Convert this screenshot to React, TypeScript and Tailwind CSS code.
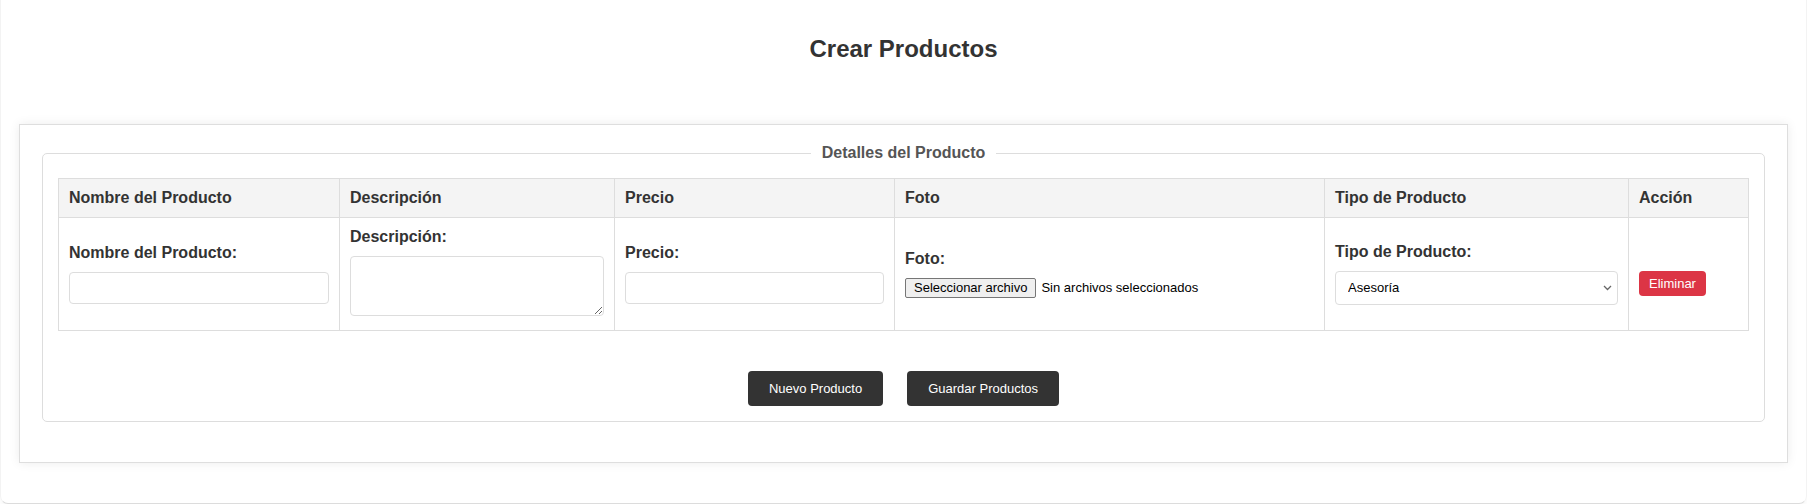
export default function App() {
  const cols = [281, 275, 280, 430, 304, 120];
  const heads = ["Nombre del Producto", "Descripción", "Precio", "Foto", "Tipo de Producto", "Acción"];

  return (
    <div className="min-h-screen bg-white" style={{ fontFamily: '"Liberation Sans", Arial, sans-serif' }}>
      <div className="border-x border-b border-x-[#f3f3f3] border-b-[#dcdcdc] rounded-b-lg pb-[40px] shadow-[0_2px_6px_rgba(0,0,0,0.04)]">
        <h1 className="pt-[35px] mb-[61px] text-center text-[24px] leading-[28px] font-bold text-[#333]">
          Crear Productos
        </h1>

        <div className="mx-[18px] border border-[#dedede] bg-white pt-[19px] pb-[40px] px-[22px] shadow-[0_0_10px_rgba(0,0,0,0.08)]">
          <fieldset className="border border-[#ddd] rounded-[5px] px-[15px] pt-[16px] pb-[15px]">
            <legend className="mx-auto px-[11px] text-[16px] leading-[18px] font-bold text-[#555]">
              Detalles del Producto
            </legend>

            <table className="w-full table-fixed border-collapse text-[#333]">
              <colgroup>
                {cols.map((w, i) => (
                  <col key={i} style={{ width: w }} />
                ))}
              </colgroup>
              <thead>
                <tr className="bg-[#f4f4f4]">
                  {heads.map((h) => (
                    <th
                      key={h}
                      className="border border-[#ddd] px-[10px] py-[10px] text-left text-[16px] leading-[18px] font-bold"
                    >
                      {h}
                    </th>
                  ))}
                </tr>
              </thead>
              <tbody>
                <tr>
                  <td className="border border-[#ddd] px-[10px] align-middle">
                    <label className="block mb-[10px] text-[16px] leading-[18px] font-bold">Nombre del Producto:</label>
                    <input type="text" className="block w-full h-[32px] border border-[#ddd] rounded-[4px] px-[8px] text-[13px]" />
                  </td>
                  <td className="border border-[#ddd] px-[10px] pt-[10px] pb-[14px] align-top">
                    <label className="block mb-[10px] text-[16px] leading-[18px] font-bold">Descripción:</label>
                    <textarea className="block w-full h-[60px] border border-[#ddd] rounded-[4px] px-[8px] text-[13px]" />
                  </td>
                  <td className="border border-[#ddd] px-[10px] align-middle">
                    <label className="block mb-[10px] text-[16px] leading-[18px] font-bold">Precio:</label>
                    <input type="text" className="block w-full h-[32px] border border-[#ddd] rounded-[4px] px-[8px] text-[13px]" />
                  </td>
                  <td className="border border-[#ddd] px-[10px] align-middle">
                    <label className="block mb-[10px] text-[16px] leading-[18px] font-bold">Foto:</label>
                    <div className="flex items-center gap-[5px] text-[13px]">
                      <span className="h-[20px] flex items-center px-[8px] bg-[#efefef] border border-[#767676] rounded-[2px] text-black">
                        Seleccionar archivo
                      </span>
                      <span className="text-black">Sin archivos seleccionados</span>
                    </div>
                  </td>
                  <td className="border border-[#ddd] px-[10px] align-middle">
                    <label className="block mb-[10px] text-[16px] leading-[18px] font-bold">Tipo de Producto:</label>
                    <div className="relative">
                      <select className="block w-full h-[34px] appearance-none border border-[#ddd] rounded-[4px] pl-[12px] pr-[24px] text-[13px] text-black bg-white">
                        <option>Asesoría</option>
                      </select>
                      <svg
                        className="pointer-events-none absolute right-[6px] top-[14px]"
                        width="9"
                        height="6"
                        viewBox="0 0 9 6"
                        fill="none"
                      >
                        <path d="M1 1l3.5 3.5L8 1" stroke="#666" strokeWidth="1.3" />
                      </svg>
                    </div>
                  </td>
                  <td className="border border-[#ddd] px-[10px] align-middle">
                    <button className="mt-[19px] h-[25px] px-[10px] rounded-[4px] bg-[#dc3545] text-white text-[13px]">
                      Eliminar
                    </button>
                  </td>
                </tr>
              </tbody>
            </table>

            <div className="mt-[40px] flex justify-center gap-[24px]">
              <button className="h-[35px] px-[21px] rounded-[4px] bg-[#333] text-white text-[13px] font-medium">
                Nuevo Producto
              </button>
              <button className="h-[35px] px-[21px] rounded-[4px] bg-[#333] text-white text-[13px] font-medium">
                Guardar Productos
              </button>
            </div>
          </fieldset>
        </div>
      </div>
    </div>
  );
}
